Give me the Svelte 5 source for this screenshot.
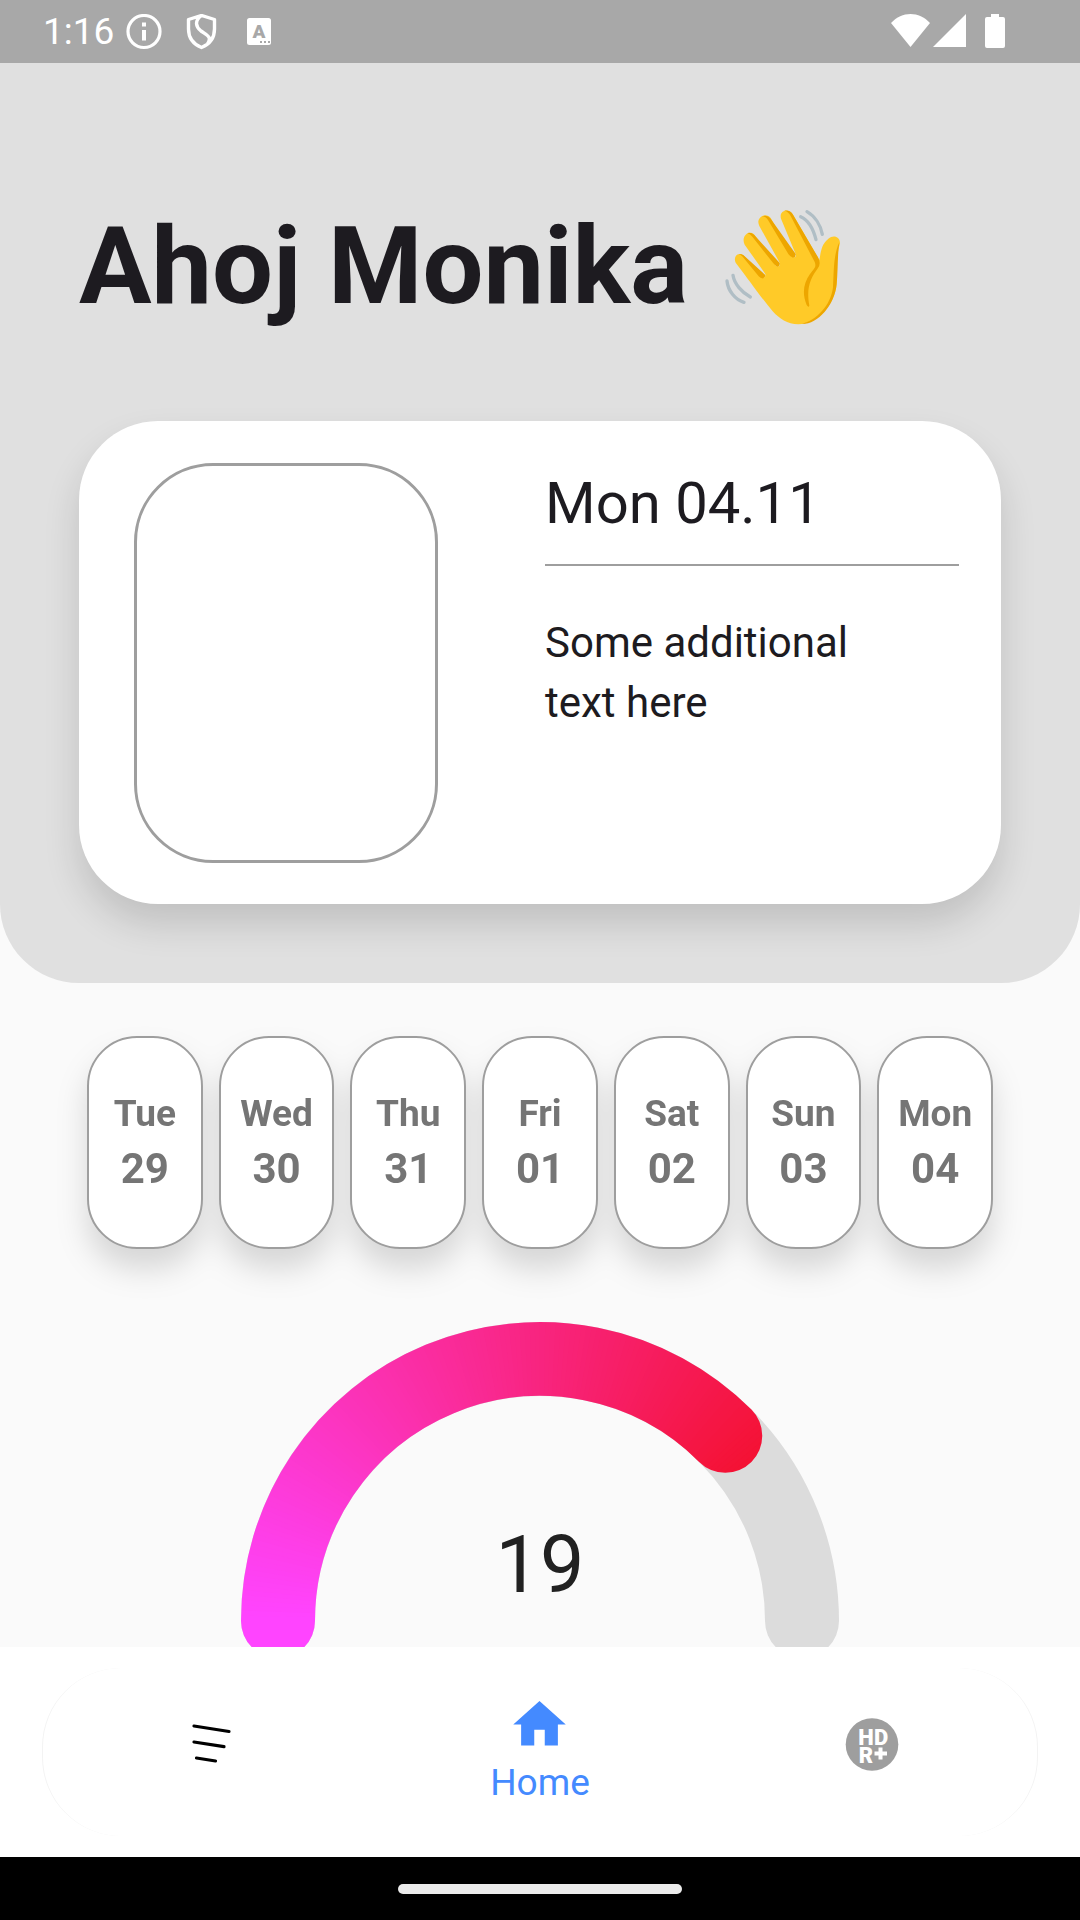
<script>
  const days = [
    { name: 'Tue', date: '29' },
    { name: 'Wed', date: '30' },
    { name: 'Thu', date: '31' },
    { name: 'Fri', date: '01' },
    { name: 'Sat', date: '02' },
    { name: 'Sun', date: '03' },
    { name: 'Mon', date: '04' },
  ];

  const cx = 300;
  const cy = 300;
  const radius = 262;
  const value = 19;
  const sweep = 135;
  // The rounded end reaches a little past the sweep; the colours run on under it.
  const painted = sweep + 10;
  const from = [255, 68, 255];
  const to = [244, 17, 48];

  function point(deg) {
    const a = ((180 - deg) * Math.PI) / 180;
    return `${cx + radius * Math.cos(a)} ${cy - radius * Math.sin(a)}`;
  }

  function arc(start, end) {
    return `M${point(start)}A${radius} ${radius} 0 0 1 ${point(end)}`;
  }

  function mix(t) {
    return `rgb(${from.map((c, i) => Math.round(c + (to[i] - c) * t)).join(',')})`;
  }

  // The value arc is painted in short slices so its colour follows the sweep.
  const slices = Array.from({ length: painted }, (_, i) => ({
    d: arc(i, Math.min(i + 2, painted)),
    color: mix(i / painted),
  }));
</script>

<div class="screen">
  <div class="status">
    <span class="time">1:16</span>
    <div class="notices">
      <svg viewBox="0 0 36 36" aria-hidden="true">
        <circle cx="18" cy="17.500" r="16" fill="none" stroke="#fff" stroke-width="3.200" />
        <path d="M16 8.500h4v4h-4zM16 16h4v10.500h-4z" fill="#fff" />
      </svg>
      <svg viewBox="0 0 36 36" aria-hidden="true">
        <path
          d="M17.500 1.500 30.500 5.500V15C30.500 24 26 30 17.500 33.500C9 30 4.500 24 4.500 15V5.500ZM17.500 1.500C10 7 12 13 17 17C24 22 28 23 23.500 30"
          fill="none" stroke="#fff" stroke-width="3.400" stroke-linejoin="round" />
      </svg>
      <svg viewBox="0 0 36 36" aria-hidden="true">
        <rect x="5" y="4" width="24" height="27" rx="2.500" fill="#fff" />
        <text class="letter" x="17" y="24" text-anchor="middle">A</text>
        <path d="M18 27h2v2h-2zM22 27h2v2h-2zM26 27h2v2h-2z" fill="#a8a8a8" />
      </svg>
    </div>
    <div class="signals">
      <svg class="wifi" viewBox="0 0 39 34" aria-hidden="true">
        <path d="M0 9C11-3 28-3 39 9L19.500 33Z" fill="#fff" />
      </svg>
      <svg class="cell" viewBox="0 0 33 34" aria-hidden="true">
        <path d="M33 0V33H0Z" fill="#fff" />
      </svg>
      <svg class="battery" viewBox="0 0 20 34" aria-hidden="true">
        <path d="M6 0h8v3h4q2 0 2 2v27q0 2-2 2H2q-2 0-2-2V5q0-2 2-2h4z" fill="#fff" />
      </svg>
    </div>
  </div>

  <main>
    <header>
      <h1>
        Ahoj Monika
        <svg class="wave" viewBox="60 40 375 375" role="img" aria-label="waving hand">
          <path
            d="M107 216C98 196 116 182 132 195L186 260Q198 264 196 250L134 162C122 138 146 116 163 132L228 226Q242 230 239 216L178 106C165 80 198 63 212 82L276 198Q290 204 287 190L243 84C236 60 264 50 278 70L358 208C362 190 362 162 385 144C402 130 424 140 419 162C408 195 413 240 410 278C406 342 350 401 295 401C262 401 238 384 218 362C180 316 150 272 107 216Z"
            fill="#ffca28" />
          <g fill="#eda600">
            <path d="M116 190Q126 188 134 197L195 252Q198 258 190 263Q182 264 176 257L128 198Q123 192 116 190Z" />
            <path d="M142 127Q153 124 163 133L239 217Q241 225 232 228Q226 226 220 218L157 138Q151 130 142 127Z" />
            <path d="M186 77Q202 72 212 84L287 190Q288 199 279 201Q270 198 265 190L204 88Q198 78 186 77Z" />
            <path d="M253 60Q270 57 279 72L354 200Q364 218 354 232C332 262 318 290 328 345Q326 352 320 343C306 308 310 278 330 250C345 230 350 228 343 212L272 76Q265 62 253 60Z" />
            <path d="M418 155C412 195 414 240 410 280C404 345 352 402 305 400C350 388 392 346 399 290C402 235 400 195 418 155Z" />
          </g>
          <g fill="none" stroke="#b0bec5" stroke-width="10" stroke-linecap="round">
            <path d="M302 78C325 88 340 115 348 147" />
            <path d="M321 63C345 77 362 104 367 131" />
            <path d="M99 254C103 280 125 305 151 319" />
            <path d="M81 271C84 300 105 327 132 335" />
          </g>
        </svg>
      </h1>

      <section class="card">
        <div class="photo"></div>
        <div class="info">
          <h2>Mon 04.11</h2>
          <p>Some additional text here</p>
        </div>
      </section>
    </header>

    <div class="days">
      {#each days as day}
        <button type="button">
          <span class="name">{day.name}</span>
          <span class="date">{day.date}</span>
        </button>
      {/each}
    </div>

    <svg class="gauge" viewBox="0 0 600 338" role="img" aria-label="Progress">
      <mask id="value-shape" maskUnits="userSpaceOnUse" x="0" y="0" width="600" height="338">
        <path d={arc(0, sweep)} fill="none" stroke="#fff" stroke-width="74" stroke-linecap="round" />
      </mask>
      <path d={arc(0, 180)} fill="none" stroke="#dcdcdc" stroke-width="74" stroke-linecap="round" />
      <g mask="url(#value-shape)">
        <rect x="0" y={cy} width="80" height="38" fill={mix(0)} />
        {#each slices as slice}
          <path d={slice.d} fill="none" stroke={slice.color} stroke-width="78" />
        {/each}
      </g>
      <text x="300" y="271" text-anchor="middle">{value}</text>
    </svg>
  </main>

  <nav>
    <div class="tabs">
      <button type="button" aria-label="Menu">
        <svg viewBox="0 0 63 63" aria-hidden="true">
          <path
            d="M17 13 52 18.500M17 29 47 33.700M19.500 45 38.500 48"
            fill="none" stroke="#000" stroke-width="3.200" stroke-linecap="round" />
        </svg>
      </button>
      <button type="button" class="active">
        <svg viewBox="0 0 24 24" aria-hidden="true">
          <path d="M10 20v-6h4v6h5v-8h3L12 3 2 12h3v8z" fill="currentColor" />
        </svg>
        <span>Home</span>
      </button>
      <button type="button" aria-label="HDR plus">
        <svg viewBox="0 0 63 63" aria-hidden="true">
          <circle cx="32" cy="31.500" r="26.300" fill="#9e9e9e" />
          <text class="hdr" text-anchor="middle"><tspan x="26" y="31.500">H</tspan><tspan x="41">D</tspan><tspan x="26" y="50">R</tspan></text>
          <path d="M38.500 34.500h4v4h4.500v4h-4.500v4h-4v-4H34.500v-4h4z" fill="#fff" />
        </svg>
      </button>
    </div>
  </nav>

  <div class="system"><div class="handle"></div></div>
</div>

<style>
  :global(body) {
    margin: 0;
  }

  .screen {
    display: flex;
    flex-direction: column;
    height: 100vh;
    background: #fafafa;
    color: #1d1b20;
    font-family: Roboto, 'Liberation Sans', sans-serif;
  }

  svg {
    display: block;
    flex: none;
  }

  button {
    margin: 0;
    padding: 0;
    border: 0;
    background: none;
    font: inherit;
    color: inherit;
    cursor: pointer;
  }

  .status {
    display: flex;
    align-items: flex-start;
    box-sizing: border-box;
    height: 63px;
    padding: 14px 75px 0 43px;
    background: #a8a8a8;
    color: #fff;
  }

  .time {
    font-size: 37px;
    line-height: 36px;
  }

  .notices {
    display: flex;
    gap: 22px;
    margin-left: 12px;
  }

  .notices svg {
    width: 36px;
    height: 36px;
  }

  .letter {
    font-size: 19px;
    font-weight: 900;
    fill: #a8a8a8;
  }

  .signals {
    display: flex;
    gap: 3px;
    margin-left: auto;
  }

  .signals svg {
    height: 34px;
  }

  .wifi {
    width: 39px;
  }

  .cell {
    width: 33px;
  }

  .battery {
    width: 20px;
    margin-left: 16px;
  }

  main {
    flex: 1;
    min-height: 0;
    overflow-y: auto;
    scrollbar-width: none;
  }

  header {
    padding: 140px 79px 79px;
    border-radius: 0 0 79px 79px;
    background: #e0e0e0;
  }

  h1 {
    display: flex;
    align-items: center;
    gap: 32px;
    margin: 0 0 92px;
    font-size: 108px;
    font-weight: 700;
    line-height: 126px;
  }

  .wave {
    width: 125px;
    height: 125px;
  }

  .card {
    display: grid;
    grid-template-columns: 304fr 414fr;
    gap: 107px;
    padding: 42px 42px 41px 55px;
    border-radius: 79px;
    background: #fff;
    box-shadow: 0 20px 36px rgba(0, 0, 0, 0.14);
  }

  .photo {
    box-sizing: border-box;
    height: 400px;
    border: 3px solid #9e9e9e;
    border-radius: 79px;
  }

  .info {
    padding-top: 6px;
  }

  h2 {
    margin: 0 0 47px;
    padding-bottom: 27px;
    border-bottom: 2px solid #9e9e9e;
    font-size: 58px;
    font-weight: 400;
    line-height: 68px;
  }

  p {
    margin: 0;
    padding-right: 64px;
    font-size: 42px;
    line-height: 60px;
  }

  .days {
    display: flex;
    gap: 16px;
    margin: 53px 87px 72px;
    filter: drop-shadow(0 20px 15px rgba(0, 0, 0, 0.14));
  }

  .days button {
    display: flex;
    flex: 1 1 0;
    flex-direction: column;
    align-items: center;
    gap: 8px;
    padding: 54px 0 53px;
    border: 2px solid #9e9e9e;
    border-radius: 50px;
    background: #fff;
    color: #757575;
    font-weight: 700;
  }

  .name {
    font-size: 37px;
    line-height: 44px;
  }

  .date {
    font-size: 42px;
    line-height: 50px;
  }

  .gauge {
    width: 600px;
    max-width: 100%;
    margin: 0 auto;
  }

  .gauge text {
    font-size: 79px;
    fill: #212121;
  }

  nav {
    padding: 21px 42px;
    background: #fff;
  }

  .tabs {
    display: grid;
    grid-template-columns: repeat(3, 1fr);
    box-sizing: border-box;
    height: 168px;
    border: solid #f3f3f3;
    border-width: 0 1px;
    border-radius: 79px;
  }

  .tabs button {
    display: flex;
    flex-direction: column;
    align-items: center;
    justify-content: center;
    padding-bottom: 16px;
  }

  .tabs svg {
    width: 63px;
    height: 63px;
  }

  .tabs .active {
    padding-bottom: 6px;
    color: #448aff;
    font-size: 37px;
    line-height: 44px;
  }

  .tabs .active span {
    margin-top: 5px;
  }

  .hdr {
    font-size: 22px;
    font-weight: 900;
    fill: #fff;
  }

  .system {
    display: flex;
    align-items: center;
    justify-content: center;
    height: 63px;
    background: #000;
  }

  .handle {
    width: 284px;
    height: 10px;
    border-radius: 5px;
    background: #ebebeb;
  }
</style>
